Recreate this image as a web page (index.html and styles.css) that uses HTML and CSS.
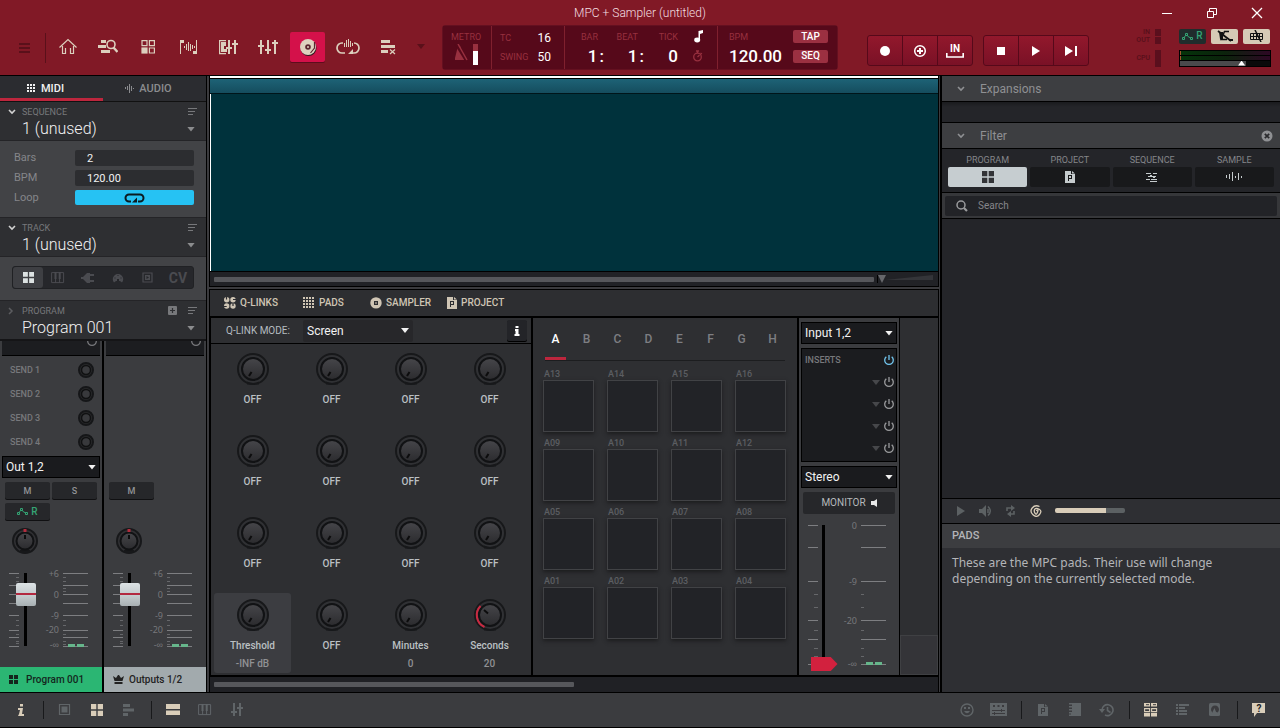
FILE: index.html
```html
<!DOCTYPE html>
<html lang="en">
<head>
<meta charset="utf-8">
<title>MPC + Sampler (untitled)</title>
<link rel="stylesheet" href="styles.css">
</head>
<body>
<svg class="defs" aria-hidden="true">
  <defs>
    <linearGradient id="cap" x1="0" y1="0" x2="0" y2="1"><stop offset="0" stop-color="#46464a"/><stop offset="1" stop-color="#2b2b2e"/></linearGradient>
  </defs>
  <symbol id="menu" viewBox="0 0 20 20"><path fill="currentColor" d="M4 5h11v2H4zM4 9h11v2H4zM4 13h11v2H4z"/></symbol>
  <symbol id="home" viewBox="0 0 20 20"><path fill="none" stroke="currentColor" stroke-width="1.200" d="M1.500 10.500L10 2.500l8.500 8M4.500 9v7.500h3V11M12.500 11v5.500h3V9"/></symbol>
  <symbol id="browse" viewBox="0 0 20 20"><path fill="currentColor" d="M3 3h5v3H3zM0 8h8v3H0zM3 13h9v3H3z"/><circle cx="13" cy="7.500" r="4" fill="none" stroke="currentColor" stroke-width="1.600"/><path d="M15.500 10.500l4 4.500" stroke="currentColor" stroke-width="2.400"/></symbol>
  <symbol id="grid" viewBox="0 0 20 20"><path fill="none" stroke="currentColor" stroke-width="1.200" d="M4 3.600h5v5H4zM11.400 3.600h5v5h-5zM11.400 11h5v5h-5z"/><path fill="currentColor" d="M3.400 10.400h6.200v6.200H3.400z"/></symbol>
  <symbol id="sample" viewBox="0 0 20 20"><path fill="currentColor" d="M2 3h4v3H3v11H2zM18 3h1v14h-4v-3h3zM6 9h1v2H6zM8 7h1v6H8zM10 5h1v9h-1zM12 7h1v7h-1zM14 8h1v4h-1zM16 9h1v2h-1z"/></symbol>
  <symbol id="trackmix" viewBox="0 0 20 20"><path fill="none" stroke="currentColor" stroke-width="1.200" d="M8 3.600H1.600v13H8"/><path fill="currentColor" d="M3 5h5v4H6v3h3v3H3zM10 3h2v7h2v2h-2v5h-2v-5H8v-2h2zM16 3h2v3h2v2h-2v9h-2V8h-2V6h2z"/></symbol>
  <symbol id="mixer" viewBox="0 0 20 20"><path fill="currentColor" d="M2 3h2v5h2v2H4v7H2v-7H0V8h2zM9 3h2v9h2v2h-2v3H9v-3H7v-2h2zM16 3h2v2h2v2h-2v10h-2V7h-2V5h2z"/></symbol>
  <symbol id="disc" viewBox="0 0 20 20"><circle cx="10.500" cy="11" r="8" fill="#2d1a20"/><circle cx="10" cy="10" r="8" fill="#ded2bf"/><circle cx="10" cy="10" r="2.800" fill="#5b2630"/><circle cx="10" cy="10" r="1" fill="#ded2bf"/><path d="M16.500 5v6l-4 5" fill="none" stroke="#5b2630" stroke-width="1.200"/></symbol>
  <symbol id="looper" viewBox="0 0 24 20"><path fill="none" stroke="currentColor" stroke-width="1.700" d="M7 6H6a5 5 0 0 0 0 10h3M18 6a5 5 0 0 1 0 10h-3"/><path fill="currentColor" d="M8 6h1v4H8zM10 3h1v7h-1zM12 2h1v8h-1zM14 4h1v6h-1zM16 6h1v3h-1zM12 17l5-5v5z"/></symbol>
  <symbol id="listx" viewBox="0 0 20 20"><path fill="currentColor" d="M3 3h9v3H3zM3 8h14v3H3zM3 13h7v3H3z"/><path stroke="currentColor" stroke-width="1.200" d="M12 12.500l5 4.500M17 12.500L12 17"/></symbol>
  <symbol id="tri" viewBox="0 0 8 5"><path fill="currentColor" d="M0 0h8L4 5z"/></symbol>
  <symbol id="metronome" viewBox="0 0 14 18"><path fill="currentColor" d="M4 2h2l4 11v3H1v-2z"/><path d="M2 0l10 16" stroke="#56091a" stroke-width="3"/><path d="M4 0l9 16" stroke="currentColor" stroke-width="1.500"/></symbol>
  <symbol id="note" viewBox="0 0 10 13"><path fill="currentColor" d="M4.500 1L9 0v3L6 4v6H4.500z"/><ellipse cx="3.200" cy="10" rx="3" ry="2.400" fill="currentColor"/></symbol>
  <symbol id="timer" viewBox="0 0 12 12"><circle cx="5.500" cy="7" r="3.800" fill="none" stroke="currentColor" stroke-width="1.300"/><path d="M4 1h3M5.500 1v2M5.500 7l2-2M8.500 3l1.500 1" stroke="currentColor" stroke-width="1.300" fill="none"/></symbol>
  <symbol id="rec" viewBox="0 0 20 20"><circle cx="10" cy="10" r="5" fill="currentColor"/></symbol>
  <symbol id="overdub" viewBox="0 0 20 20"><circle cx="10" cy="10" r="5.300" fill="none" stroke="currentColor" stroke-width="1.500"/><path fill="currentColor" d="M9 7h2v2h2v2h-2v2H9v-2H7V9h2z"/></symbol>
  <symbol id="tray" viewBox="0 0 18 5"><path d="M.8 0v4h16.400V0" fill="none" stroke="currentColor" stroke-width="1.600"/></symbol>
  <symbol id="stop" viewBox="0 0 20 20"><path fill="currentColor" d="M6 6h8v8H6z"/></symbol>
  <symbol id="play" viewBox="0 0 20 20"><path fill="currentColor" d="M6 5l8 5-8 5z"/></symbol>
  <symbol id="playstart" viewBox="0 0 20 20"><path fill="currentColor" d="M4 5l8 5-8 5zM14 5h2v10h-2z"/></symbol>
  <symbol id="auto" viewBox="0 0 11 9"><path d="M1.500 6.500l3-4.500 2 3 3 1" fill="none" stroke="currentColor"/><path fill="#202c2c" stroke="currentColor" d="M.5 5.500h2v2h-2zM3.500 1.500h2v2h-2zM8.500 5.500h2v2h-2z"/></symbol>
  <symbol id="punch" viewBox="0 0 18 14"><path d="M2 2l13 10" stroke="currentColor" stroke-width="1.800" fill="none"/><path d="M13 2.500H8.500L5 10.500H11" stroke="currentColor" stroke-width="1.500" fill="none"/><path fill="currentColor" d="M3 3h4v7H4zM13 10h4v2h-4z"/></symbol>
  <symbol id="keys-off" viewBox="0 0 14 12"><path fill="none" stroke="currentColor" d="M.5 3.500h12v6H.5zM.5 6.500h12M3.500 3v7M6.500 3v7M9.500 3v7"/><path d="M5 0l6 12" stroke="currentColor" stroke-width="1.500"/></symbol>
  <symbol id="dots" viewBox="0 0 9 9"><path fill="currentColor" d="M0 0h2v2H0zM3 0h2v2H3zM6 0h2v2H6zM0 3h2v2H0zM3 3h2v2H3zM6 3h2v2H6zM0 6h2v2H0zM3 6h2v2H3zM6 6h2v2H6z"/></symbol>
  <symbol id="wave" viewBox="0 0 18 12"><path fill="currentColor" d="M1 4h1v3H1zM4 3h1v5H4zM7 1h1v9H7zM10 5h1v2h-1zM13 2h1v7h-1zM16 5h1v2h-1z"/></symbol>
  <symbol id="wave-sm" viewBox="0 0 9 9"><path fill="currentColor" d="M0 3h1v2H0zM2 2h1v4H2zM4 0h1v9H4zM6 2h1v5H6zM8 4h1v1H8z"/></symbol>
  <symbol id="chev" viewBox="0 0 8 6"><path d="M1 1l3 3 3-3" fill="none" stroke="currentColor" stroke-width="1.600"/></symbol>
  <symbol id="chev-r" viewBox="0 0 6 8"><path d="M1 1l3 3-3 3" fill="none" stroke="currentColor" stroke-width="1.500"/></symbol>
  <symbol id="lines" viewBox="0 0 9 8"><path fill="currentColor" d="M0 0h9v1H0zM0 3h7v1H0zM0 6h5v1H0z"/></symbol>
  <symbol id="plus" viewBox="0 0 10 10"><rect width="9" height="9" rx="1" fill="currentColor"/><path d="M4.500 2v5M2 4.500h5" stroke="#2e2f32" stroke-width="1.200"/></symbol>
  <symbol id="loop" viewBox="0 0 22 10"><path d="M7 8.500H5a3.500 3.500 0 0 1 0-7h11a3.500 3.500 0 0 1 0 7h-2" fill="none" stroke="currentColor" stroke-width="2"/><path fill="currentColor" d="M8 9.500l5-5v5z"/></symbol>
  <symbol id="four" viewBox="0 0 12 12"><path fill="currentColor" d="M0 0h5.300v5.300H0zM6.700 0H12v5.300H6.700zM0 6.700h5.300V12H0zM6.700 6.700H12V12H6.700z"/></symbol>
  <symbol id="piano" viewBox="0 0 14 12"><path d="M.6.600h12v10H.6zM4.600 6v5M8.600 6v5" fill="none" stroke="currentColor"/><path fill="currentColor" d="M3.500 0h2v7h-2zM7.700 0h2v7h-2z"/></symbol>
  <symbol id="plug" viewBox="0 0 14 12"><path fill="currentColor" d="M0 5h2l4-4h3v10H6L2 7H0zM9 2h4v2H9zM9 8h4v2H9z"/></symbol>
  <symbol id="midi" viewBox="0 0 12 12"><path d="M2 10.500a5.200 5.200 0 1 1 8 0l-2-1.500H4z" fill="currentColor"/><path fill="#242529" d="M2.500 5.500h1v1h-1zM5.500 3h1v1h-1zM8.500 5.500h1v1h-1zM5 7h2v2H5z"/></symbol>
  <symbol id="clip" viewBox="0 0 12 12"><path d="M1 1h9v9H1z" fill="none" stroke="currentColor" stroke-width="1.200"/><path fill="currentColor" d="M3 3h5v5H3z"/><path fill="#242529" d="M4.500 4l2.500 1.500L4.500 7z"/></symbol>
  <symbol id="crown" viewBox="0 0 11 9"><path fill="currentColor" d="M0 1l3 2 2-3h1l2 3 3-2-1.500 5H1.500zM1.500 7h8v2h-8z"/></symbol>
  <symbol id="info" viewBox="0 0 8 12"><path fill="currentColor" d="M3 0h3v2.500H3zM1 4h5L5 10h2v2H1l1-2 1-4H1z"/></symbol>
  <symbol id="info-b" viewBox="0 0 8 12"><path fill="currentColor" d="M2.500 1h3v2h-3zM2 4h3.500v5H6.500v2h-5V9h1V6H2z"/></symbol>
  <symbol id="qlinks" viewBox="0 0 12 12"><g fill="currentColor"><circle cx="2.700" cy="2.700" r="2.700"/><circle cx="9" cy="2.700" r="2.700"/><circle cx="2.700" cy="9" r="2.700"/><circle cx="9" cy="9" r="2.700"/></g><path d="M2.500 0v2.500M12 2.500H9M0 9.500h2.700M9 6v3" stroke="#2c2c30" stroke-width="1.200"/></symbol>
  <symbol id="pads" viewBox="0 0 12 12"><path fill="currentColor" d="M0 0h2v2H0zM3 0h2v2H3zM6 0h2v2H6zM9 0h2v2H9zM0 3h2v2H0zM3 3h2v2H3zM6 3h2v2H6zM9 3h2v2H9zM0 6h2v2H0zM3 6h2v2H3zM6 6h2v2H6zM9 6h2v2H9zM0 9h2v2H0zM3 9h2v2H3zM6 9h2v2H6zM9 9h2v2H9z"/></symbol>
  <symbol id="sampler" viewBox="0 0 12 12"><path fill="currentColor" fill-rule="evenodd" d="M6 .2a5.700 5.700 0 1 0 0 11.400A5.700 5.700 0 1 0 6 .2zM4 4v4h4V4z"/><path fill="currentColor" d="M5.300 5.300h1.400v1.400H5.300z"/></symbol>
  <symbol id="doc" viewBox="0 0 10 12"><path fill="currentColor" fill-rule="evenodd" d="M0 0h6v3h4v9H0zM3 4v6h1V8h3V4zM4 5h2v2H4z"/><path fill="currentColor" d="M7 0l3 2.500H7z"/></symbol>
  <symbol id="seq" viewBox="0 0 12 10"><path fill="currentColor" d="M0 1h5v1H0zM7 1h4v1H7zM2 4h8v1H2zM0 7h4v1H0zM5 7h6v1H5zM4 3h2v1H4zM7 5h2v1H7zM4 9h7v1H4z"/></symbol>
  <symbol id="mag" viewBox="0 0 12 12"><circle cx="5" cy="5" r="4" fill="none" stroke="currentColor" stroke-width="1.500"/><path d="M8 8l3 3" stroke="currentColor" stroke-width="2.200"/></symbol>
  <symbol id="closec" viewBox="0 0 12 12"><circle cx="6" cy="6" r="5.500" fill="currentColor"/><path d="M3.800 3.800l4.400 4.400M8.200 3.800L3.800 8.200" stroke="#2a2a2d" stroke-width="1.700"/></symbol>
  <symbol id="power" viewBox="0 0 12 12"><path d="M3.300 2.800a4.300 4.300 0 1 0 5.400 0M6 1v5" fill="none" stroke="currentColor" stroke-width="1.300"/></symbol>
  <symbol id="speaker" viewBox="0 0 14 12"><path fill="currentColor" d="M0 4h3l4-4v12L3 8H0z"/><path d="M9 4v4M9 1.500q4.500 4.500 0 9" stroke="currentColor" fill="none" stroke-width="1.500"/></symbol>
  <symbol id="cycle" viewBox="0 0 12 12"><path d="M2 6V3h5M9 6v3H5" fill="none" stroke="currentColor" stroke-width="1.600"/><path fill="currentColor" d="M6 0l4 3-4 3zM6 6L2 9l4 3z"/></symbol>
  <symbol id="spiral" viewBox="0 0 12 12"><path d="M9.500 1.500Q5-.5 2.200 3T3 9.800t6.500-.3T9.200 4.200 4.800 4.200t.2 4 2.600-1.200-1.400-1.200" fill="none" stroke="currentColor" stroke-width="1.300"/></symbol>
  <symbol id="box" viewBox="0 0 14 14"><path d="M1.500 1.500h10v10h-10z" fill="none" stroke="currentColor" stroke-width="1.200"/><path fill="currentColor" d="M3.500 3.500h6v6h-6z"/></symbol>
  <symbol id="bars" viewBox="0 0 14 14"><path fill="currentColor" d="M1 1h7v3H1zM1 5.500h11v3H1zM1 10h5v3H1z"/></symbol>
  <symbol id="rows" viewBox="0 0 14 12"><path fill="currentColor" d="M0 0h14v5H0zM0 6.500h14V11H0z"/></symbol>
  <symbol id="faders" viewBox="0 0 14 14"><path fill="currentColor" d="M3 0h2v8h2v2H5v3H3v-3H1V8h2zM9 0h2v4h2v2h-2v7H9V6H7V4h2z"/></symbol>
  <symbol id="smile" viewBox="0 0 14 14"><circle cx="7" cy="7" r="6" fill="none" stroke="currentColor" stroke-width="1.400"/><path d="M4 8q3 4.500 6 0z" fill="currentColor"/><path fill="currentColor" d="M4 4h2v2H4zM8 4h2v2H8z"/></symbol>
  <symbol id="console" viewBox="0 0 18 14"><path fill="currentColor" d="M0 0h17v13H0z"/><path stroke="#3b3b3e" d="M2 7.500h13M2 10.500h13M4.500 9v3M11.500 6v3" fill="none"/><path fill="#3b3b3e" d="M3 2h2v2H3zM7.500 2h2v2h-2zM12 2h2v2h-2z"/></symbol>
  <symbol id="book" viewBox="0 0 14 14"><path fill="currentColor" d="M3 0h10v13H3zM1 0h2v1.500H1zM1 3h2v1.500H1zM1 6h2v1.500H1zM1 9h2v1.500H1zM1 11.500h2V13H1z"/><path d="M3.500 1.500v1.500M3.500 4.500V6M3.500 7.500V9" stroke="#3b3b3e"/></symbol>
  <symbol id="history" viewBox="0 0 16 14"><path d="M3 7a5.500 5.500 0 1 1 3 5M8.500 4v3.500l3 2" fill="none" stroke="currentColor" stroke-width="1.600"/><path fill="currentColor" d="M0 6h6L3 10z"/></symbol>
  <symbol id="channels" viewBox="0 0 14 14"><path fill="none" stroke="currentColor" stroke-width="1.100" d="M.6 5.600h5v3h-5zM7.600 5.600h5v3h-5z"/><path fill="currentColor" d="M0 0h6v3.500H0zM7 0h6v3.500H7zM0 10h6v3.500H0zM7 10h6v3.500H7z"/><path d="M2 1.700h3M9 1.700h3" stroke="#3b3b3e"/></symbol>
  <symbol id="list" viewBox="0 0 14 12"><path fill="currentColor" d="M0 0h2v2H0zM3 0h10v2H3zM0 3h2v2H0zM3 3h6v2H3zM0 6h2v2H0zM3 6h8v2H3zM0 9h2v2H0zM3 9h8v2H3z"/></symbol>
  <symbol id="drive" viewBox="0 0 12 14"><rect width="11" height="13" rx="1.500" fill="currentColor"/><path d="M3.500 9.500a4 4 0 1 1 5 0L5 8z" fill="#3b3b3e"/><path d="M5.500 5l1.500 4H3.500z" fill="currentColor"/></symbol>
  <symbol id="help" viewBox="0 0 14 14"><path fill="currentColor" d="M1 0h12v10H5l-3 4v-4H0V0z"/></symbol>
  <symbol id="knob" viewBox="0 0 34 34"><circle cx="17" cy="17" r="15" fill="#303134" stroke="#17181a" stroke-width="2"/><path d="M11 29.500a14 14 0 0 0 12 0v3H11z" fill="#17181a"/><circle cx="17" cy="17" r="11" fill="url(#cap)" stroke="#111214" stroke-width="2"/></symbol>
  <symbol id="send" viewBox="0 0 16 16"><circle cx="8" cy="8" r="7" fill="#2a2b2d" stroke="#151618" stroke-width="2"/><circle cx="8" cy="8" r="4.500" fill="#38393c" stroke="#101112" stroke-width="1.500"/></symbol>
  <symbol id="pan" viewBox="0 0 26 26"><circle cx="13" cy="13" r="12" fill="#303033" stroke="#17181a" stroke-width="2"/><path d="M8 22h10v3H8z" fill="#17181a"/><circle cx="13" cy="13" r="8.500" fill="url(#cap)" stroke="#111214" stroke-width="2"/><path d="M13 7v4" stroke="#0c0c0d" stroke-width="2"/><path d="M13 1v3" stroke="#b32c3d" stroke-width="3"/></symbol>
  <symbol id="scale" viewBox="0 0 102 84">
    <path stroke="#7d7e81" d="M9 5.500h10M9 17.500h10M9 26.500h10M9 35.500h10M9 47.500h10M9 62.500h10M9 69.500h10M9 78.500h10M63 5.500h25M63 17.500h25M63 26.500h25M63 35.500h25M63 47.500h25M63 62.500h25M63 69.500h25M63 78.500h25"/>
    <path stroke="#66676a" d="M16 9.500h3M16 13.500h3M16 21.500h3M16 52.500h3M16 57.500h3M16 66.500h3M16 73.500h3M16 75.500h3M63 9.500h3M63 13.500h3M63 20.500h3M63 23.500h3M63 52.500h3M63 57.500h3M63 66.500h3M63 73.500h3M63 76.500h3"/>
    <path fill="#66b68b" d="M68 76h7v3h-7zM77 76h7v3h-7z"/>
  </symbol>
</svg>

<header class="top">
  <div class="titlebar">
    <h1>MPC + Sampler (untitled)</h1>
    <div class="window-buttons">
      <button aria-label="Minimize"><svg width="12" height="12"><path d="M1 6.500h10" stroke="#fff"/></svg></button>
      <button aria-label="Restore"><svg width="12" height="12"><path d="M1.500 4.500h6v6h-6zM3.500 4V1.500h7v6H8" fill="none" stroke="#fff"/></svg></button>
      <button aria-label="Close"><svg width="12" height="12"><path d="M1 1l10 10M11 1L1 11" stroke="#fff" stroke-width="1.300"/></svg></button>
    </div>
  </div>
  <div class="toolbar">
    <button class="menu-button" aria-label="Menu"><svg class="i20"><use href="#menu"/></svg></button>
    <nav class="modes">
      <button aria-label="Main"><svg class="i20"><use href="#home"/></svg></button>
      <button aria-label="Browser"><svg class="i20"><use href="#browse"/></svg></button>
      <button aria-label="Program edit"><svg class="i20"><use href="#grid"/></svg></button>
      <button aria-label="Sample edit"><svg class="i20"><use href="#sample"/></svg></button>
      <button aria-label="Track mixer"><svg class="i20"><use href="#trackmix"/></svg></button>
      <button aria-label="Channel mixer"><svg class="i20"><use href="#mixer"/></svg></button>
      <button class="active" aria-label="Sampler"><svg class="i20"><use href="#disc"/></svg></button>
      <button aria-label="Looper"><svg class="i24"><use href="#looper"/></svg></button>
      <button aria-label="Step sequencer"><svg class="i20"><use href="#listx"/></svg></button>
      <button class="more" aria-label="More modes"><svg width="8" height="5"><use href="#tri"/></svg></button>
    </nav>
    <div class="display">
      <div class="cell metro"><span class="lab">METRO</span><div class="metro-row"><svg width="14" height="18"><use href="#metronome"/></svg><i class="level"></i></div></div>
      <div class="cell tc"><span class="lab">TC</span><b>16</b><span class="lab">SWING</span><b>50</b></div>
      <div class="cell pos"><span class="lab unit">BAR</span><span class="lab unit">BEAT</span><span class="lab">TICK</span><svg class="white" width="10" height="13"><use href="#note"/></svg><b>1<span>:</span></b><b>1<span>:</span></b><b>0</b><svg width="12" height="12"><use href="#timer"/></svg></div>
      <div class="cell tempo"><span class="lab">BPM</span><button>TAP</button><b>120.00</b><button>SEQ</button></div>
    </div>
    <div class="transport">
      <div class="group">
        <button aria-label="Record"><svg class="i20"><use href="#rec"/></svg></button>
        <button aria-label="Overdub"><svg class="i20"><use href="#overdub"/></svg></button>
        <button class="punch-in"><span>IN</span><svg width="18" height="5"><use href="#tray"/></svg></button>
      </div>
      <div class="group">
        <button aria-label="Stop"><svg class="i20"><use href="#stop"/></svg></button>
        <button aria-label="Play"><svg class="i20"><use href="#play"/></svg></button>
        <button aria-label="Play start"><svg class="i20"><use href="#playstart"/></svg></button>
      </div>
    </div>
    <div class="status">
      <div class="io"><span>IN</span><i></i><span>OUT</span><i></i><span class="cpu">CPU</span><i class="tall"></i></div>
      <div class="master">
        <div class="badges">
          <button class="auto"><svg width="11" height="9"><use href="#auto"/></svg>R</button>
          <button aria-label="Punch"><svg width="18" height="14"><use href="#punch"/></svg></button>
          <button aria-label="Keyboard"><svg width="14" height="12"><use href="#keys-off"/></svg></button>
        </div>
        <div class="meter"><i></i><i></i><input type="range" value="70" aria-label="Master volume"></div>
      </div>
    </div>
  </div>
</header>

<main class="work">
  <aside class="left">
    <div class="tabs">
      <button class="on"><svg width="9" height="9"><use href="#dots"/></svg>MIDI</button>
      <button><svg width="9" height="9"><use href="#wave-sm"/></svg>AUDIO</button>
    </div>
    <section class="head">
      <svg class="fold" width="8" height="6"><use href="#chev"/></svg><label for="sequence">SEQUENCE</label><button aria-label="Sequence menu"><svg width="9" height="8"><use href="#lines"/></svg></button>
      <div class="pick"><select id="sequence"><option>1 (unused)</option></select></div>
    </section>
    <div class="fields">
      <label for="bars-in">Bars</label><input id="bars-in" value="2">
      <label for="bpm-in">BPM</label><input id="bpm-in" value="120.00">
      <label for="loop-in">Loop</label><button id="loop-in" aria-label="Loop"><svg width="22" height="10"><use href="#loop"/></svg></button>
    </div>
    <section class="head">
      <svg class="fold" width="8" height="6"><use href="#chev"/></svg><label for="track">TRACK</label><button aria-label="Track menu"><svg width="9" height="8"><use href="#lines"/></svg></button>
      <div class="pick"><select id="track"><option>1 (unused)</option></select></div>
    </section>
    <div class="types-box">
      <div class="types">
        <button class="on" aria-label="Drum"><svg width="11" height="11"><use href="#four"/></svg></button>
        <button aria-label="Keygroup"><svg width="14" height="12"><use href="#piano"/></svg></button>
        <button aria-label="Plugin"><svg width="14" height="12"><use href="#plug"/></svg></button>
        <button aria-label="MIDI"><svg width="12" height="12"><use href="#midi"/></svg></button>
        <button aria-label="Clip"><svg width="12" height="12"><use href="#clip"/></svg></button>
        <button>CV</button>
      </div>
    </div>
    <section class="head program">
      <svg class="fold" width="6" height="8"><use href="#chev-r"/></svg><label for="program">PROGRAM</label><span class="tools"><button aria-label="Add program"><svg width="10" height="10"><use href="#plus"/></svg></button><button aria-label="Program menu"><svg width="9" height="8"><use href="#lines"/></svg></button></span>
      <div class="pick"><select id="program"><option>Program 001</option></select></div>
    </section>
    <div class="strips">
      <div class="strip">
        <div class="stub"><svg width="12" height="12"><use href="#power"/></svg></div>
        <div class="sends">
          <div>SEND 1<svg width="16" height="16"><use href="#send"/></svg></div>
          <div>SEND 2<svg width="16" height="16"><use href="#send"/></svg></div>
          <div>SEND 3<svg width="16" height="16"><use href="#send"/></svg></div>
          <div>SEND 4<svg width="16" height="16"><use href="#send"/></svg></div>
        </div>
        <div class="drop"><select aria-label="Output"><option>Out 1,2</option></select></div>
        <div class="ms"><button>M</button><button>S</button><button class="auto"><svg width="11" height="9"><use href="#auto"/></svg>R</button></div>
        <svg class="pan" width="26" height="26"><use href="#pan"/></svg>
        <div class="fader"><svg class="ticks" viewBox="0 0 102 84"><use href="#scale"/><g class="nums"><text x="59" y="9">+6</text><text x="59" y="30">0</text><text x="59" y="51">-9</text><text x="59" y="65">-20</text><text x="59" y="80">-∞</text></g></svg><input type="range" value="81" aria-label="Program volume"></div>
        <button class="name green"><svg width="9" height="9"><use href="#four"/></svg>Program 001</button>
      </div>
      <div class="strip">
        <div class="stub"><svg width="12" height="12"><use href="#power"/></svg></div>
        <div class="sends"></div>
        <div class="drop none"></div>
        <div class="ms"><button>M</button></div>
        <svg class="pan" width="26" height="26"><use href="#pan"/></svg>
        <div class="fader"><svg class="ticks" viewBox="0 0 102 84"><use href="#scale"/><g class="nums"><text x="59" y="9">+6</text><text x="59" y="30">0</text><text x="59" y="51">-9</text><text x="59" y="65">-20</text><text x="59" y="80">-∞</text></g></svg><input type="range" value="81" aria-label="Output volume"></div>
        <button class="name grey"><svg width="11" height="9"><use href="#crown"/></svg>Outputs 1/2</button>
      </div>
    </div>
  </aside>

  <section class="center">
    <div class="timeline">
      <div class="ruler"></div>
      <div class="canvas"></div>
      <div class="scroll"><div class="lane"><i></i></div><svg class="zoomer" viewBox="0 0 56 8" width="56" height="8"><path d="M7 5L55 0v5z" fill="#343539"/><path d="M0 0h8L4 8z" fill="#66676b"/></svg></div>
    </div>
    <div class="lower">
      <nav class="panels">
        <button class="p1"><svg width="12" height="12"><use href="#qlinks"/></svg>Q-LINKS</button>
        <button class="p2"><svg width="12" height="12"><use href="#pads"/></svg>PADS</button>
        <button class="p3"><svg width="12" height="12"><use href="#sampler"/></svg>SAMPLER</button>
        <button class="p4"><svg width="10" height="12"><use href="#doc"/></svg>PROJECT</button>
      </nav>
      <div class="racks">
        <section class="qlinks">
          <div class="qbar"><label for="qmode">Q-LINK MODE:</label><div class="drop flat"><select id="qmode"><option>Screen</option></select></div><button aria-label="Info"><svg width="8" height="12"><use href="#info-b"/></svg></button></div>
          <div class="knobs">
            <div class="q"><svg viewBox="0 0 34 34"><use href="#knob"/><path d="M13 24l2.500-4"/></svg>OFF</div>
            <div class="q"><svg viewBox="0 0 34 34"><use href="#knob"/><path d="M13 24l2.500-4"/></svg>OFF</div>
            <div class="q"><svg viewBox="0 0 34 34"><use href="#knob"/><path d="M13 24l2.500-4"/></svg>OFF</div>
            <div class="q"><svg viewBox="0 0 34 34"><use href="#knob"/><path d="M13 24l2.500-4"/></svg>OFF</div>
            <div class="q"><svg viewBox="0 0 34 34"><use href="#knob"/><path d="M13 24l2.500-4"/></svg>OFF</div>
            <div class="q"><svg viewBox="0 0 34 34"><use href="#knob"/><path d="M13 24l2.500-4"/></svg>OFF</div>
            <div class="q"><svg viewBox="0 0 34 34"><use href="#knob"/><path d="M13 24l2.500-4"/></svg>OFF</div>
            <div class="q"><svg viewBox="0 0 34 34"><use href="#knob"/><path d="M13 24l2.500-4"/></svg>OFF</div>
            <div class="q"><svg viewBox="0 0 34 34"><use href="#knob"/><path d="M13 24l2.500-4"/></svg>OFF</div>
            <div class="q"><svg viewBox="0 0 34 34"><use href="#knob"/><path d="M13 24l2.500-4"/></svg>OFF</div>
            <div class="q"><svg viewBox="0 0 34 34"><use href="#knob"/><path d="M13 24l2.500-4"/></svg>OFF</div>
            <div class="q"><svg viewBox="0 0 34 34"><use href="#knob"/><path d="M13 24l2.500-4"/></svg>OFF</div>
            <div class="q sel"><svg viewBox="0 0 34 34"><use href="#knob"/><path d="M13 24l2.500-4"/></svg>Threshold<small>-INF dB</small></div>
            <div class="q"><svg viewBox="0 0 34 34"><use href="#knob"/><path d="M13 24l2.500-4"/></svg>OFF</div>
            <div class="q"><svg viewBox="0 0 34 34"><use href="#knob"/><path d="M13 24l2.500-4"/></svg>Minutes<small>0</small></div>
            <div class="q"><svg viewBox="0 0 34 34"><use href="#knob"/><path d="M11 12l4 3.500"/><path class="arc" d="M11.500 29A13 13 0 0 1 7.500 8"/></svg>Seconds<small>20</small></div>
          </div>
        </section>
        <section class="padbank">
          <nav class="banks"><button class="on">A</button><button>B</button><button>C</button><button>D</button><button>E</button><button>F</button><button>G</button><button>H</button></nav>
          <div class="pads">
            <div>A13<button aria-label="Pad A13"></button></div><div>A14<button aria-label="Pad A14"></button></div><div>A15<button aria-label="Pad A15"></button></div><div>A16<button aria-label="Pad A16"></button></div>
            <div>A09<button aria-label="Pad A09"></button></div><div>A10<button aria-label="Pad A10"></button></div><div>A11<button aria-label="Pad A11"></button></div><div>A12<button aria-label="Pad A12"></button></div>
            <div>A05<button aria-label="Pad A05"></button></div><div>A06<button aria-label="Pad A06"></button></div><div>A07<button aria-label="Pad A07"></button></div><div>A08<button aria-label="Pad A08"></button></div>
            <div>A01<button aria-label="Pad A01"></button></div><div>A02<button aria-label="Pad A02"></button></div><div>A03<button aria-label="Pad A03"></button></div><div>A04<button aria-label="Pad A04"></button></div>
          </div>
        </section>
        <section class="input">
          <div class="drop"><select aria-label="Input"><option>Input 1,2</option></select></div>
          <div class="inserts">
            <div><span>INSERTS</span><button class="lit" aria-label="All inserts"><svg width="12" height="12"><use href="#power"/></svg></button></div>
            <div><svg class="dim" width="8" height="5"><use href="#tri"/></svg><button aria-label="Insert 1"><svg width="12" height="12"><use href="#power"/></svg></button></div>
            <div><svg class="dim" width="8" height="5"><use href="#tri"/></svg><button aria-label="Insert 2"><svg width="12" height="12"><use href="#power"/></svg></button></div>
            <div><svg class="dim" width="8" height="5"><use href="#tri"/></svg><button aria-label="Insert 3"><svg width="12" height="12"><use href="#power"/></svg></button></div>
            <div><svg class="dim" width="8" height="5"><use href="#tri"/></svg><button aria-label="Insert 4"><svg width="12" height="12"><use href="#power"/></svg></button></div>
          </div>
          <div class="drop"><select aria-label="Channels"><option>Stereo</option></select></div>
          <button class="monitor">MONITOR<svg width="6" height="8"><path d="M6 0v8L3 6H0V2h3z" fill="#e8e8e8"/></svg></button>
          <div class="fader tall"><svg class="ticks" viewBox="0 0 100 152">
            <path stroke="#7d7e81" d="M9 7.500h10M9 29.500h10M9 63.500h10M9 102.500h10M9 121.500h10M9 146.500h10M62 7.500h25M62 29.500h25M62 63.500h25M62 102.500h25M62 121.500h25M62 146.500h25"/>
            <path stroke="#66676a" d="M15 76.500h4M15 89.500h4M15 112.500h4M15 130.500h4M15 138.500h4M62 76.500h3M62 89.500h3M62 112.500h3M62 130.500h3M62 138.500h3"/>
            <path fill="#66b68b" d="M67 144h7v3h-7zM76 144h7v3h-7z"/>
            <g class="nums"><text x="58" y="11">0</text><text x="58" y="67">-9</text><text x="58" y="106">-20</text><text x="58" y="149">-∞</text></g></svg><input type="range" value="0" aria-label="Record level"></div>
        </section>
        <section class="rest"><i></i></section>
      </div>
      <div class="scroll bottom"><div class="lane"><i></i></div></div>
    </div>
  </section>

  <aside class="right">
    <button class="bar"><svg width="8" height="6"><use href="#chev"/></svg>Expansions</button>
    <div class="empty"></div>
    <div class="bar"><svg width="8" height="6"><use href="#chev"/></svg>Filter<button class="clear" aria-label="Clear filter"><svg width="12" height="12"><use href="#closec"/></svg></button></div>
    <div class="kinds">
      <label>PROGRAM<button class="on" aria-label="Program"><svg width="12" height="12"><use href="#four"/></svg></button></label>
      <label>PROJECT<button aria-label="Project"><svg width="10" height="12"><use href="#doc"/></svg></button></label>
      <label>SEQUENCE<button aria-label="Sequence"><svg width="12" height="10"><use href="#seq"/></svg></button></label>
      <label>SAMPLE<button aria-label="Sample"><svg width="18" height="12"><use href="#wave"/></svg></button></label>
    </div>
    <div class="search"><div><svg width="12" height="12"><use href="#mag"/></svg><input placeholder="Search" aria-label="Search"></div></div>
    <div class="results"></div>
    <div class="preview">
      <button aria-label="Play"><svg width="20" height="20"><use href="#play"/></svg></button>
      <button aria-label="Audition"><svg width="14" height="12"><use href="#speaker"/></svg></button>
      <button aria-label="Cycle"><svg width="12" height="12"><use href="#cycle"/></svg></button>
      <button class="lit" aria-label="Sync"><svg width="12" height="12"><use href="#spiral"/></svg></button>
      <input type="range" value="72" aria-label="Preview volume">
    </div>
    <h2>PADS</h2>
    <p>These are the MPC pads. Their use will change depending on the currently selected mode.</p>
  </aside>
</main>

<footer class="foot">
  <button class="lit" aria-label="Info"><svg width="8" height="12"><use href="#info"/></svg></button><i></i>
  <button aria-label="Single"><svg width="14" height="14"><use href="#box"/></svg></button>
  <button class="lit" aria-label="Pads"><svg width="12" height="12"><use href="#four"/></svg></button>
  <button aria-label="Tracks"><svg width="14" height="14"><use href="#bars"/></svg></button><i></i>
  <button class="lit" aria-label="Split"><svg width="14" height="12"><use href="#rows"/></svg></button>
  <button aria-label="Keys"><svg width="14" height="12"><use href="#piano"/></svg></button>
  <button aria-label="Mixer"><svg width="14" height="14"><use href="#faders"/></svg></button>
  <span class="push"></span>
  <button aria-label="Feedback"><svg width="14" height="14"><use href="#smile"/></svg></button>
  <button aria-label="Hardware"><svg width="18" height="14"><use href="#console"/></svg></button><i></i>
  <button aria-label="Project"><svg width="10" height="12"><use href="#doc"/></svg></button>
  <button aria-label="Notes"><svg width="14" height="14"><use href="#book"/></svg></button>
  <button aria-label="History"><svg width="16" height="14"><use href="#history"/></svg></button><i></i>
  <button class="lit" aria-label="Channels"><svg width="14" height="14"><use href="#channels"/></svg></button>
  <button aria-label="List"><svg width="14" height="12"><use href="#list"/></svg></button>
  <button aria-label="Drive"><svg width="12" height="14"><use href="#drive"/></svg></button><i></i>
  <button class="lit help" aria-label="Help"><svg width="14" height="14"><use href="#help"/></svg><span>?</span></button>
</footer>
</body>
</html>
```
FILE: styles.css
```css
* { box-sizing: border-box; }
body { margin: 0; height: 100vh; display: flex; flex-direction: column; background: #3b3b3e; color: #a0a1a4; font-family: Roboto, "Liberation Sans", sans-serif; font-size: 10px; line-height: 12px; overflow: hidden; }
button, input, select { font: inherit; color: inherit; border: 0; padding: 0; margin: 0; background: none; border-radius: 0; min-width: 0; }
button { display: flex; align-items: center; justify-content: center; }
select { appearance: none; width: 100%; outline: 0; }
input[type="range"] { appearance: none; }
svg { display: block; flex: none; }
h1, h2, p { margin: 0; font-weight: 400; }
.defs { position: absolute; width: 0; height: 0; }
.i20 { width: 20px; height: 20px; }
.i24 { width: 24px; height: 20px; }
.lit { color: #d9cdb9; }

/* header */
.top { background: #811926; border-bottom: 1px solid #000; padding-bottom: 5px; }
.titlebar { display: grid; grid-template-columns: 1fr auto 1fr; align-items: center; height: 25px; }
.titlebar h1 { grid-column: 2; font-size: 12px; font-weight: 300; color: #f3dfe0; }
.window-buttons { display: flex; justify-content: flex-end; padding-right: 1px; }
.window-buttons button { width: 45px; height: 25px; }
.toolbar { display: flex; align-items: center; height: 45px; color: #dccfbd; }
.menu-button { width: 46px; height: 30px; color: #5a101a; border-right: 1px solid #5a101a; padding-left: 4px; }
.modes { display: flex; gap: 5px; margin-left: 4px; padding-bottom: 2px; }
.modes button { width: 35px; height: 30px; border-radius: 2px; }
.modes .active { background: #d4114a; box-shadow: 0 1px #5e0d1c; }
.modes .more { width: 22px; color: #5a101a; }
.display { display: flex; gap: 1px; height: 45px; margin-left: 10px; border: 1px solid #641020; border-radius: 3px; background: #80202e; }
.cell { background: #56091a; color: #fff; }
.lab { color: #98303f; font-size: 9px; }
.display b { font-weight: 500; }
.metro { width: 48px; padding: 5px 8px; }
.metro-row { display: flex; gap: 5px; margin-top: 1px; padding-left: 3px; color: #98303f; }
.level { width: 5px; height: 21px; background: linear-gradient(#98303f 7px, #fff 7px); }
.tc { width: 72px; display: grid; grid-template-columns: 1fr auto; align-content: space-evenly; align-items: center; padding: 0 13px 0 8px; font-size: 12px; }
.tc b { line-height: 16px; font-weight: 400; }
.pos { width: 152px; display: grid; grid-template-columns: 39px 40px 34px 26px; justify-items: end; align-items: center; align-content: space-evenly; color: #98303f; }
.pos .unit { padding-right: 6px; }
.pos b span { margin-left: 2px; }
.pos b, .tempo b { color: #fff; font-size: 17px; line-height: 18px; }
.pos .white { color: #fff; }
.tempo { width: 119px; display: grid; grid-template-columns: 1fr 35px; align-items: center; align-content: space-evenly; padding: 0 9px 0 11px; }
.tempo button { height: 13px; border-radius: 2px; background: #9b3041; color: #fff; font-size: 10px; font-weight: 500; }
.transport { display: flex; gap: 10px; margin-left: 29px; color: #fff; padding-top: 6px; }
.group { display: flex; border: 1px solid #56091a; border-radius: 3px; background: linear-gradient(#92182c, #7a1126); }
.group button { width: 35px; height: 29px; }
.group button:first-child { width: 34px; }
.group button + button { border-left: 1px solid #56091a; }
.group .punch-in { flex-direction: column; font-size: 10px; font-weight: 700; line-height: 9px; }
.status { display: flex; gap: 18px; margin-left: auto; padding-right: 9px; }
.io { display: grid; grid-template-columns: 16px 6px; column-gap: 5px; row-gap: 1px; align-items: center; color: #560f1a; font-size: 7px; font-weight: 500; line-height: 7px; text-align: right; align-content: start; }
.io i { height: 7px; background: #5a0f1d; }
.io .tall { height: 17px; margin-top: 5px; }
.io .cpu { margin-top: 5px; }
.badges { display: flex; gap: 5px; }
.badges button { width: 27px; height: 15px; border-radius: 2px; background: #d6cab6; color: #111; }
.badges .auto { background: #202c2c; }
.auto, .badges .auto { gap: 3px; color: #35a474; font-weight: 500; }
.meter { width: 92px; height: 17px; margin-top: 6px; border: 1px solid #000; background: #000; display: grid; grid-template-rows: 5px 5px 5px; row-gap: 0; }
.meter i { background: linear-gradient(90deg, #a0522d 1px, #04330a 1px, #0c230c 50%, #2d0824); border-bottom: 1px solid #000; }
.meter input { width: 100%; height: 5px; background: linear-gradient(90deg, #4a4a4c 66px, #0a0a0a 66px); }
.meter input::-webkit-slider-thumb { appearance: none; width: 7px; height: 5px; background: #fff; clip-path: polygon(50% 0, 100% 100%, 0 100%); }

/* workspace */
.work { flex: 1; min-height: 0; display: grid; grid-template-columns: 207px minmax(0, 1fr) 339px; grid-template-rows: minmax(0, 1fr); column-gap: 2px; border-bottom: 1px solid #000; }
.left { display: flex; flex-direction: column; min-height: 0; border-right: 1px solid #000; }
.tabs { display: grid; grid-template-columns: 1fr 1fr; height: 26px; background: #2b2c30; border-bottom: 1px solid #111; }
.tabs button { gap: 5px; font-size: 11px; font-weight: 500; color: #8b8c8f; padding: 3px 12px 0 0; border-bottom: 3px solid transparent; }
.tabs .on { color: #f1f1f1; border-color: #bd263d; }
.head { display: grid; grid-template-columns: 14px 1fr auto; align-items: center; align-content: start; height: 39px; padding: 4px 9px 0 8px; background: #2e2f32; border-bottom: 1px solid #242427; color: #77787b; font-size: 9px; }
.head .fold { color: #d2d2d2; }
.head .tools { display: flex; gap: 10px; }
.program { height: 41px; border-bottom: 2px solid #151517; border-top: 1px solid #242427; }
.program .fold { color: #5c5d60; }
.pick { grid-column: 2 / 4; display: flex; align-items: center; padding-right: 2px; }
.pick select { height: 22px; font-size: 16px; font-weight: 300; line-height: 22px; color: #f2f2f2; }
.pick::after, .drop::after { content: ""; flex: none; width: 8px; height: 5px; background: #8b8c8e; clip-path: polygon(0 0, 100% 0, 50% 100%); }
.fields { display: grid; grid-template-columns: 61px 1fr; row-gap: 4px; align-content: start; align-items: center; height: 77px; padding: 9px 12px 0 14px; background: #424346; font-size: 11px; border-bottom: 1px solid #242427; color: #85868a; }
.fields input { width: 100%; height: 16px; border-radius: 2px; background: #2c2d30; padding-left: 12px; color: #f2f2f2; }
.fields button { height: 15px; border-radius: 2px; background: #26c2f3; color: #0b1a20; }
.types-box { height: 43px; padding: 9px 12px; background: #424346; }
.types { display: grid; grid-template-columns: repeat(6, 1fr); height: 23px; background: #26272b; border: 1px solid #202124; border-radius: 3px; color: #4a4b50; }
.types button { font-size: 14px; font-weight: 700; }
.types .on { background: #3e3f43; color: #dce2e2; border-radius: 3px; }
.strips { flex: 1; display: grid; grid-template-columns: 1fr 1fr; column-gap: 2px; background: #000; min-height: 0; }
.strip { display: flex; flex-direction: column; background: #3b3c3f; min-width: 0; }
.strip > * { flex: none; }
.stub { height: 15px; margin: 0 2px; display: flex; justify-content: flex-end; align-items: center; padding: 0 2px 14px 0; overflow: hidden; background: #1c1d20; border-bottom: 1px solid #000; color: #77787b; }
.sends { height: 96px; margin-top: 2px; padding: 0 8px 0 10px; font-weight: 500; color: #77787b; }
.sends div { display: flex; align-items: center; justify-content: space-between; height: 24px; font-size: 9px; }
.drop { display: flex; align-items: center; height: 22px; margin: 2px 2px 0; padding: 0 3px; background: #1a1b1e; border: 1px solid #000; color: #f2f2f2; font-size: 12px; }
.drop select { height: 20px; }
.drop::after { background: #f2f2f2; }
.drop.none { visibility: hidden; }
.ms { display: grid; grid-template-columns: 1fr 1fr; grid-auto-rows: 17px; gap: 4px 2px; height: 38px; margin: 4px 5px 0; }
.ms button { border-radius: 2px; background: #26272a; box-shadow: 0 1px #101012; font-size: 9px; font-weight: 500; color: #929396; }
.ms .auto { color: #35a474; font-size: 10px; }
.pan { margin: 8px 0 0 12px; }
.fader { display: grid; margin-top: 14px; }
.fader > * { grid-area: 1 / 1; }
.ticks { width: 100%; }
.nums { fill: #77787b; font-family: "Noto Sans", sans-serif; font-size: 9px; text-anchor: end; }
.fader input { writing-mode: vertical-lr; direction: rtl; width: 21px; height: 73px; margin: 5px 0 0 15px; background: linear-gradient(#000, #000) center / 3px 100% no-repeat; }
.fader input::-webkit-slider-thumb { appearance: none; width: 20px; height: 23px; border-radius: 2px; background: linear-gradient(#dde3e5, #c6cdd0 10px, #b32840 10px, #b32840 12px, #c6cdd0 12px, #a8b0b3); }
.strip .name { height: 25px; margin-top: auto; justify-content: flex-start; gap: 8px; padding-left: 9px; color: #14261d; font-weight: 500; font-size: 10px; }
.strip .green { background: #2bb673; }
.strip .grey { background: #a2aaad; color: #222; gap: 5px; }

.center { display: flex; flex-direction: column; gap: 2px; min-width: 0; min-height: 0; }
.timeline { display: flex; flex-direction: column; flex: none; height: 211px; border: 1px solid #000; border-top: 0; }
.ruler { height: 18px; background: linear-gradient(#1e6478, #154d5e); border-top: 2px solid #fff; border-bottom: 1px solid #00151a; box-shadow: inset 0 1px #000; }
.canvas { flex: 1; background: #00323c; border-left: 1px solid #fff; }
.scroll { display: flex; align-items: center; flex: none; height: 15px; background: #212226; border-top: 1px solid #000; }
.lane { flex: 1; padding: 0 4px; }
.lane i { display: block; height: 5px; border-radius: 1px; background: #56575b; }
.zoomer { width: 60px; padding-right: 4px; box-shadow: -1px 0 #000; }
.lower { flex: 1; display: flex; flex-direction: column; min-height: 0; border: 1px solid #000; border-bottom: 0; }
.panels { display: flex; flex: none; height: 26px; background: #2d2e31; color: #cfc5b4; padding-left: 14px; font-size: 10px; font-weight: 500; }
.panels button { justify-content: flex-start; gap: 4px; }
.panels .p1 { width: 79px; }
.panels .p2 { width: 67px; }
.panels .p3 { width: 77px; }
.racks { flex: 1; display: grid; grid-template-columns: 320px 264px 100px minmax(0, 1fr); grid-template-rows: minmax(0, 1fr); column-gap: 2px; padding: 2px 0 2px 1px; background: #000; min-height: 0; }
.racks > section { background: #2e2f32; min-height: 0; }
.qbar { display: flex; align-items: center; height: 26px; border-bottom: 1px solid #000; padding: 0 4px 0 15px; color: #b5bcc0; }
.qbar label { width: 72px; }
.drop.flat { width: 110px; margin: 0 0 0 5px; border: 0; background: #27272a; border-radius: 2px; padding: 0 4px; }
.qbar button { width: 20px; height: 21px; margin-left: auto; background: #232428; border-radius: 2px; box-shadow: 0 1px #000; color: #fff; }
.knobs { display: grid; grid-template-columns: repeat(4, 77px); grid-auto-rows: 80px; gap: 2px; padding: 3px; }
.q { display: flex; flex-direction: column; align-items: center; padding-top: 5px; border-radius: 3px; font-weight: 500; color: #bbc0c3; }
.q svg { width: 34px; height: 34px; margin-bottom: 8px; }
.q path { stroke: #0c0c0d; stroke-width: 2; fill: none; }
.q .arc { stroke: #c92a42; }
.q small { font-size: 10px; margin-top: 6px; color: #909194; }
.q.sel { background: #3c3d41; }
.banks { display: flex; margin: 0 12px; height: 43px; border-bottom: 1px solid #1c1d1f; }
.banks button { width: 21px; margin-right: 10px; font-size: 12px; font-weight: 500; color: #7d7e82; border-bottom: 3px solid transparent; flex: none; padding-top: 2px; }
.banks button:last-child { margin-right: 0; }
.banks .on { color: #fff; border-color: #bd263d; }
.pads { display: grid; grid-template-columns: repeat(4, 51px); gap: 5px 13px; padding: 8px 0 0 10px; color: #5c5e62; font-size: 9px; font-weight: 500; }
.pads div { line-height: 11px; padding-left: 1px; }
.pads button { width: 51px; height: 52px; margin: 0 0 1px -1px; background: #222327; border: 1px solid #414245; box-shadow: 0 2px 4px #1c1c1e; }
.racks > .input { background: #3b3c3f; padding-top: 2px; display: flex; flex-direction: column; }
.input > * { flex: none; }
.inserts { height: 114px; margin: 4px 2px 2px; background: #1b1c1f; border: 1px solid #000; }
.inserts div { display: flex; align-items: center; justify-content: flex-end; gap: 3px; height: 22px; padding-right: 1px; color: #77787b; }
.inserts span { margin-right: auto; padding-left: 3px; font-size: 9px; font-weight: 500; }
.inserts .dim { color: #46474a; }
.inserts button { color: #9a9b9d; }
.inserts .lit { color: #72c6ef; }
.input .monitor { height: 22px; margin: 4px 4px 0; gap: 5px; border-radius: 2px; background: #26272a; color: #b5b9bb; }
.fader.tall { margin-top: 4px; }
.fader.tall input { width: 28px; height: 146px; margin: 7px 0 0 11px; background: linear-gradient(#000, #000) 12px 0 / 3px 139px no-repeat; }
.fader.tall input::-webkit-slider-thumb { width: 27px; height: 14px; border-radius: 0; background: #d2213e; clip-path: polygon(0 0, 75% 0, 100% 50%, 75% 100%, 0 100%); }
.rest { display: flex; align-items: flex-end; margin-left: -1px; }
.rest i { flex: 1; height: 40px; background: #343438; border: 1px solid #3f4043; }
.bottom { background: #202125; border: 0; }
.bottom .lane i { width: 50%; }

.right { display: flex; flex-direction: column; min-height: 0; background: #242529; border-left: 1px solid #000; box-shadow: -1px 0 #000; }
.bar { display: flex; justify-content: flex-start; align-items: center; gap: 15px; height: 26px; padding: 1px 7px 0 15px; background: #3d3e41; border-bottom: 1px solid #000; font-size: 12px; color: #8f9093; }
.bar .clear { margin-left: auto; }
.empty { height: 21px; border-bottom: 1px solid #000; background: linear-gradient(#1a1b1e, #242529 5px); }
.kinds { display: grid; grid-template-columns: repeat(4, 1fr); gap: 3px; height: 44px; padding: 5px 6px 0; border-bottom: 1px solid #000; font-size: 9px; text-align: center; color: #85868a; }
.kinds button { width: 100%; height: 20px; margin-top: 1px; border-radius: 2px; background: #18191b; color: #c5cbcd; }
.kinds .on { background: #c6cdd0; color: #333437; }
.search { height: 26px; padding: 3px; background: #36373a; border-bottom: 1px solid #000; }
.search div { display: flex; align-items: center; gap: 10px; height: 20px; border-radius: 2px; background: #222327; padding-left: 11px; color: #9a9b9d; }
.search input { flex: 1; outline: 0; font-size: 10px; }
.search input::placeholder { color: #85868a; }
.results { flex: 1; }
.preview { display: flex; align-items: center; height: 26px; padding: 0 0 1px 6px; background: #2e2f33; border-top: 1px solid #000; border-bottom: 1px solid #000; color: #5c6163; }
.preview button { width: 25px; }
.preview .lit { color: #d9cdb9; }
.preview input { width: 70px; height: 5px; margin-left: 7px; border-radius: 2px; background: linear-gradient(90deg, #d9cdb9 50px, #5c6163 50px); }
.preview input::-webkit-slider-thumb { appearance: none; width: 1px; height: 5px; background: #d9cdb9; }
.right h2 { padding: 6px 10px; background: #3c3d40; font-size: 11px; font-weight: 500; color: #b4b5b8; }
.right p { height: 144px; padding: 7px 60px 0 10px; background: #2e2f33; font-family: "Noto Sans", sans-serif; font-size: 12px; line-height: 16px; color: #b4b5b8; }

.foot { display: flex; align-items: center; height: 35px; padding: 0 5px; background: #3b3c3f; border-bottom: 1px solid #000; color: #606568; }
.foot button { width: 32px; height: 24px; }
.foot i { width: 1px; height: 18px; margin: 0 5px 0 6px; background: #18191b; }
.push { flex: 1; }
.foot .lit { color: #d9cdb9; }
.foot .help { display: grid; place-items: center; place-content: center; }
.help > * { grid-area: 1 / 1; }
.help span { color: #222; font-size: 10px; font-weight: 700; padding-bottom: 3px; }
```
